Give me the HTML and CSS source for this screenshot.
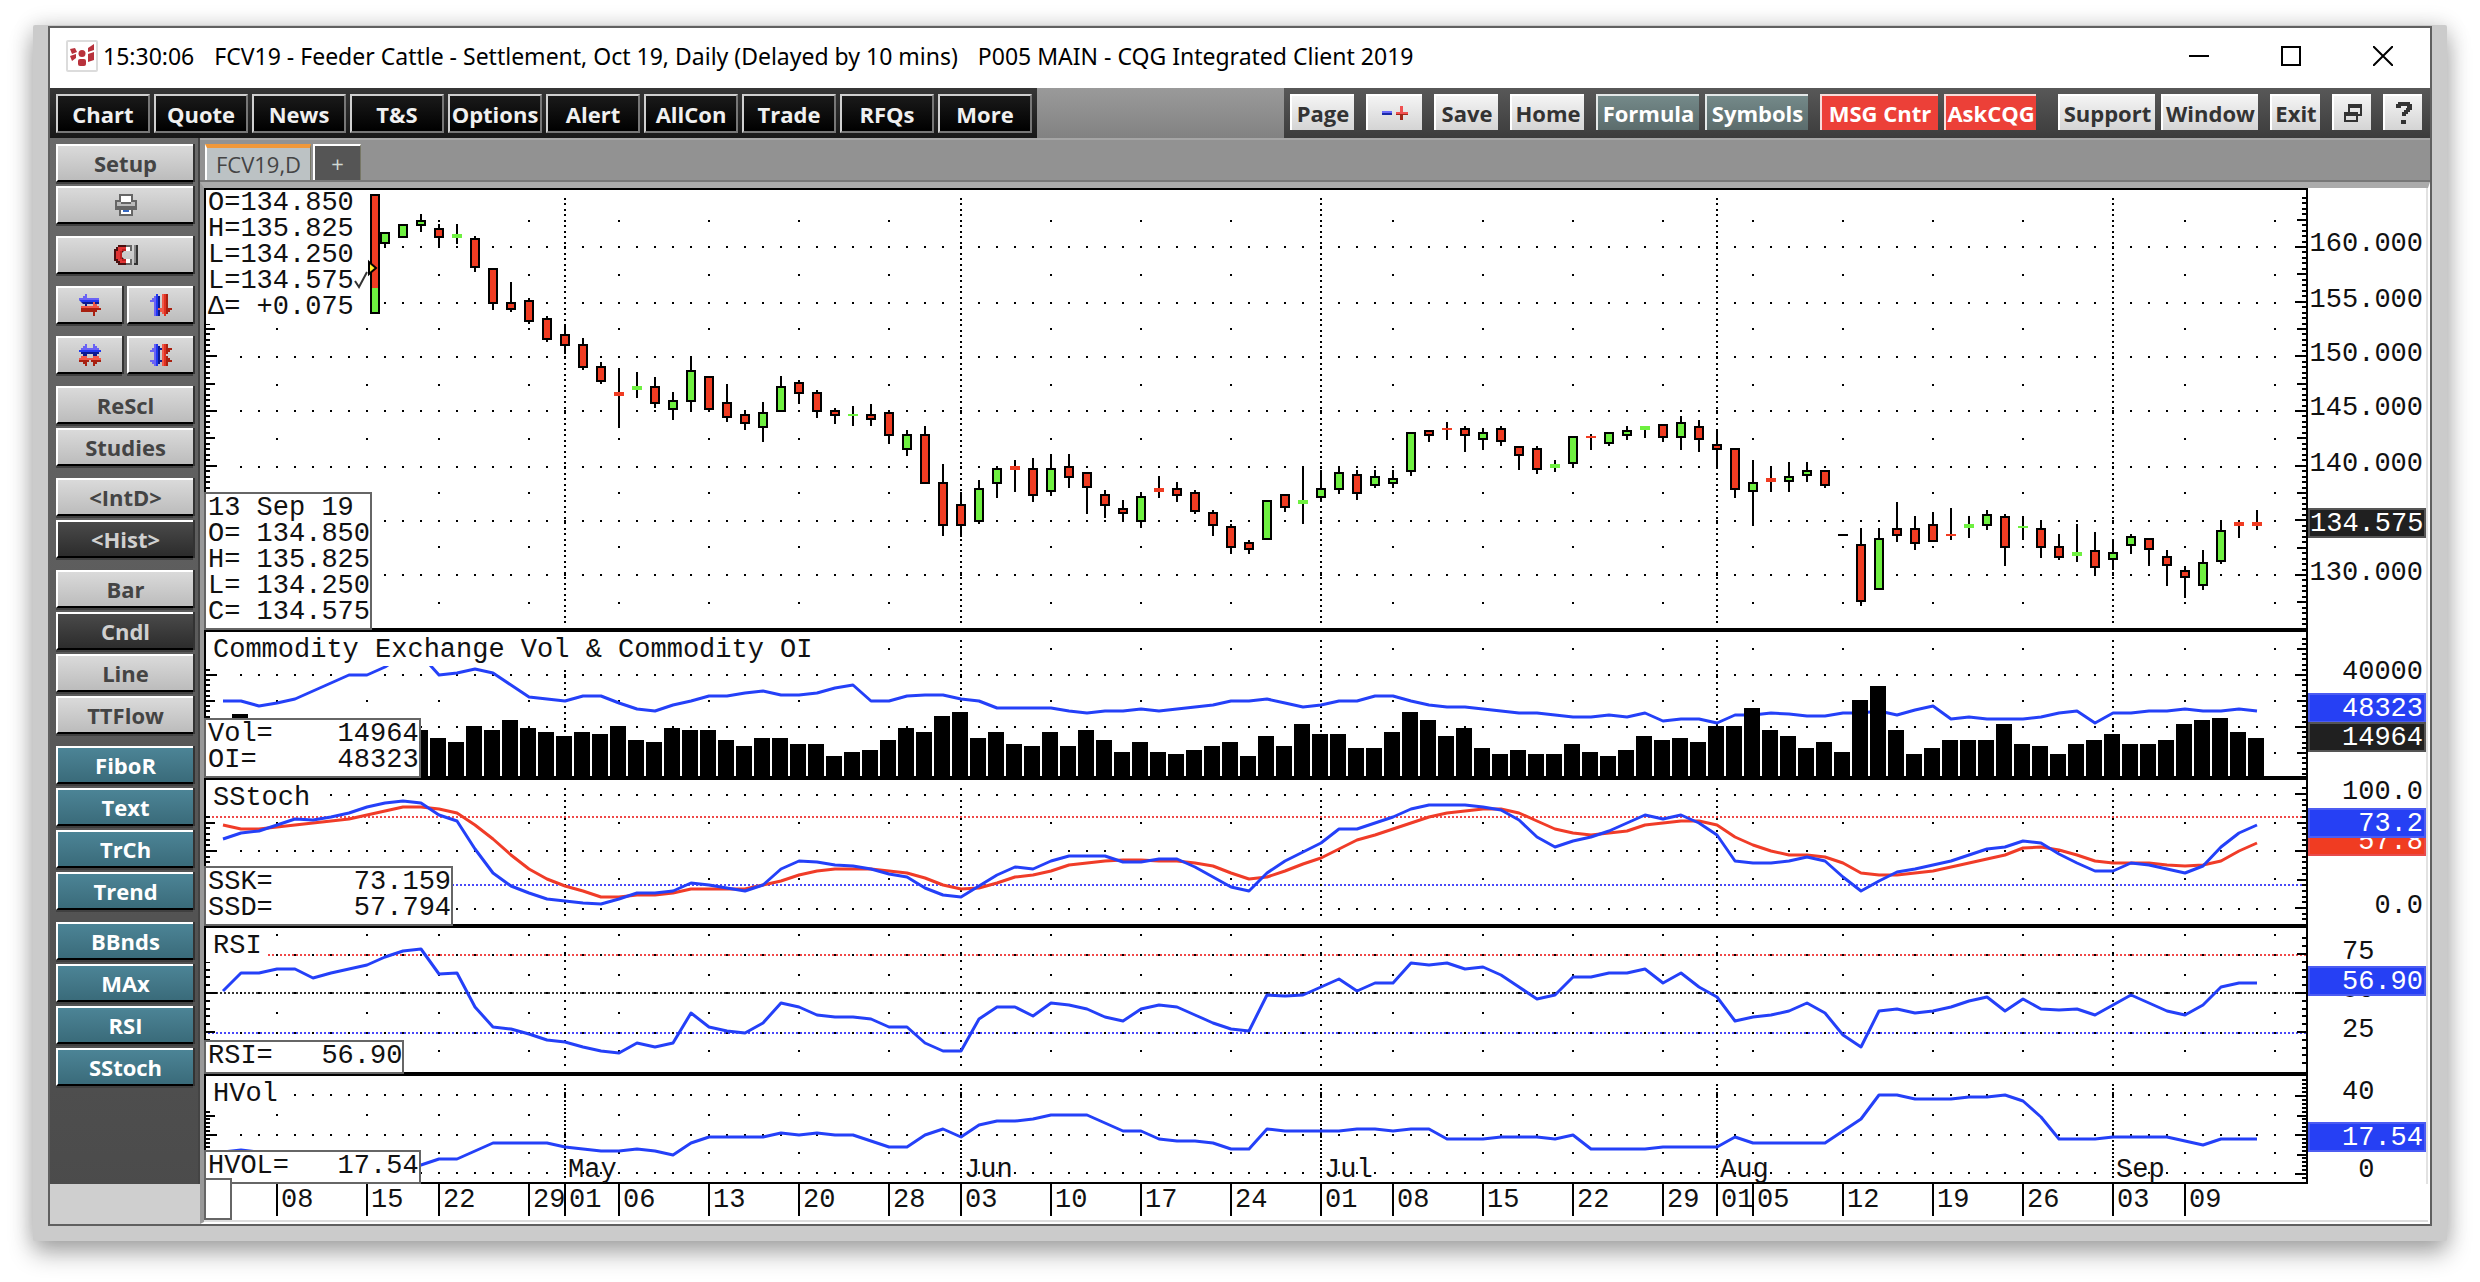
FILE: index.html
```html
<!DOCTYPE html>
<html lang="en">
<head>
<meta charset="utf-8">
<title>FCV19 - CQG Integrated Client 2019</title>
<link rel="stylesheet" href="styles.css">
</head>
<body>
<div class="frame">
<div class="window">
  <header class="titlebar">
    <svg class="logo" viewBox="0 0 32 32" aria-hidden="true"><rect x="1" y="1" width="30" height="30" rx="1" fill="#fff" stroke="#dcdcdc" stroke-width="2"/><g fill="#b8323c"><path d="M4 9l5-1 2 4-5 2zM4 16l6-2v4l-4 3zM22 8l6-4v6l-6 2zM22 14l6-2v8l-6 2z"/><circle cx="16" cy="13.500" r="3.500"/><rect x="12" y="19" width="8" height="7" rx="2"/></g></svg>
    <h1 class="caption"><span>15:30:06</span><span>FCV19 - Feeder Cattle - Settlement, Oct 19, Daily (Delayed by 10 mins)</span><span>P005 MAIN - CQG Integrated Client 2019</span></h1>
    <div class="winctl">
      <button type="button" aria-label="Minimize"><svg viewBox="0 0 20 20"><path d="M0 10h20" stroke="#000" stroke-width="2"/></svg></button>
      <button type="button" aria-label="Maximize"><svg viewBox="0 0 20 20"><path d="M1 1h18v18H1z" fill="none" stroke="#000" stroke-width="2"/></svg></button>
      <button type="button" aria-label="Close"><svg viewBox="0 0 20 20"><path d="M0 0l20 20M20 0L0 20" stroke="#000" stroke-width="2"/></svg></button>
    </div>
  </header>

  <nav class="toolbar">
    <div class="tools-left">
      <button type="button">Chart</button><button type="button">Quote</button><button type="button">News</button><button type="button">T&amp;S</button><button type="button">Options</button><button type="button">Alert</button><button type="button">AllCon</button><button type="button">Trade</button><button type="button">RFQs</button><button type="button">More</button>
    </div>
    <div class="tools-right">
      <button type="button" class="w-page">Page</button>
      <button type="button" class="w-pm" aria-label="Remove or add page"><svg class="icon" viewBox="0 0 26 16"><path d="M0 6h10v2H0z" fill="#6a6af8"/><path d="M0 8h10v2H0z" fill="#1a2aa8"/><path d="M18 1h3v6h5v2H14V7h4z" fill="#f05050"/><path d="M14 9h12v1h-5v5h-3v-5h-4z" fill="#a02818"/></svg></button>
      <button type="button" class="w-page">Save</button>
      <button type="button" class="w-home">Home</button>
      <div class="group"><button type="button" class="slate w-wide">Formula</button><button type="button" class="slate w-wide">Symbols</button></div>
      <div class="group"><button type="button" class="red w-msg">MSG Cntr</button><button type="button" class="red w-ask">AskCQG</button></div>
      <div class="group far"><button type="button" class="w-sup">Support</button><button type="button" class="w-sup">Window</button></div>
      <button type="button" class="w-exit">Exit</button>
      <button type="button" class="w-sq" aria-label="Restore"><svg class="icon18" viewBox="0 0 18 18"><path fill="#333" fill-rule="evenodd" d="M4 0h14v12h-4v6H0V8h4zM6 4v4h8v2h2V4zM2 12v4h10v-4z"/></svg></button>
      <button type="button" class="w-sq" aria-label="Help"><svg class="icon22" viewBox="0 0 16 22"><path fill="#333" d="M2 0h12v2h2v6h-2v2h-2v2h-2v2H6v-4h2V8h2V6h1V4H5v2H0V2h2zM5 18h5v4H5z"/></svg></button>
    </div>
  </nav>

  <div class="body">
    <aside class="sidebar">
      <div class="stack"><button type="button">Setup</button>
        <button type="button" aria-label="Print"><svg class="icon22" viewBox="0 0 11 11"><path fill="#666" d="M2 0h7v3h2v5h-2v3H2V8H0V3h2z"/><path fill="#fff" d="M3 1h5v3H3z"/><path fill="#bbb" d="M1 4h2v1h5V4h2v2H1z"/><path fill="#fff" d="M3 8h5v2H3z"/><path fill="#3567c0" d="M4 8h3v1H4z"/></svg></button></div>
      <div class="stack"><button type="button" aria-label="Snap"><svg class="icon24" viewBox="0 0 12 10"><path fill="#4a1010" d="M2 0h4v3H5L4 4v2l1 1h1v3H2V9H1V8H0V2h1V1h1z"/><path fill="#e03434" d="M2 1h4v1H4v1H3v4h1v1h2v1H3V8H2V7H1V3h1z"/><path fill="#c02020" d="M4 2h2v1H4zM3 3h1v4H3zM4 7h2v1H4z"/><path fill="#666" d="M6 0h3v3H6zM6 7h3v3H6z"/><path fill="#fff" d="M6 1h2v2H6zM6 7h2v2H6z"/><path fill="#333" d="M10 0h2v10h-2z"/><path fill="#888" d="M10 0h1v9h-1z"/></svg></button></div>
      <div class="stack pair"><button type="button" aria-label="Scroll horizontally"><svg class="icon22" viewBox="0 0 11 11"><path fill="#6a62f5" d="M0 3V2h2V1h1V0h1v2h6v1z"/><path fill="#2038f0" d="M0 3h10v1H1z"/><path fill="#0c1a90" d="M1 4h9v1H4v1H3V5H2z"/><path fill="#f05848" d="M1 6h6V4h1v1h1v1h1v1H1z"/><path fill="#a82010" d="M1 7h10v1H9v1H8v2H7V9H1z"/></svg></button><button type="button" aria-label="Scroll vertically"><svg class="icon22" viewBox="0 0 11 11"><path fill="#6a62f5" d="M0 4V3h1V2h1V1h1v10H2V4z"/><path fill="#2038f0" d="M3 0h1v11H3z"/><path fill="#0c1a90" d="M4 1h1v10H4z"/><path fill="#f05848" d="M6 0h1v10H6V9H5V8H4V7h2z"/><path fill="#e03020" d="M7 0h1v11H7z"/><path fill="#a82010" d="M8 0h1v7h2v1h-1v1H9v1H8z"/></svg></button></div>
      <div class="stack pair"><button type="button" aria-label="Compress horizontally"><svg class="icon22" viewBox="0 0 11 11"><path fill="#6a62f5" d="M0 3h1V2h1V1h1V0h1v2h3V0h1v1h1v1h1v1h1v1H0z"/><path fill="#2038f0" d="M0 3h11v1H0z"/><path fill="#0c1a90" d="M1 4h9v1H9v1H7V5H4v1H2V5H1z"/><path fill="#f05848" d="M0 7h1V6h3v1h3V6h3v1h1v1H0z"/><path fill="#a82010" d="M0 8h5v1H4v2H3v-1H2V9H0zM6 8h5v1H9v1H8v1H7V9H6z"/></svg></button><button type="button" aria-label="Compress vertically"><svg class="icon22" viewBox="0 0 11 11"><path fill="#6a62f5" d="M3 0v11H2v-1H1V9H0V8h2V4H0V3h1V2h1V0z"/><path fill="#2038f0" d="M3 0h1v11H3z"/><path fill="#0c1a90" d="M4 1h1v1h1v1H5v5h1v1H5v1H4z"/><path fill="#f05848" d="M6 0h1v11H6z"/><path fill="#e03020" d="M7 0h1v11H7z"/><path fill="#a82010" d="M8 0h1v2h2v1h-1v1H9v1H8v1h1v1h1v1h1v1H9v2H8z"/></svg></button></div>
      <div class="stack"><button type="button">ReScl</button><button type="button">Studies</button></div>
      <div class="stack"><button type="button">&lt;IntD&gt;</button><button type="button" class="on">&lt;Hist&gt;</button></div>
      <div class="stack"><button type="button">Bar</button><button type="button" class="on">Cndl</button><button type="button">Line</button><button type="button">TTFlow</button></div>
      <div class="stack teal"><button type="button">FiboR</button><button type="button">Text</button><button type="button">TrCh</button><button type="button">Trend</button></div>
      <div class="stack teal"><button type="button">BBnds</button><button type="button">MAx</button><button type="button">RSI</button><button type="button">SStoch</button></div>
      <div class="sidefoot"></div>
    </aside>

    <main class="work">
      <div class="tabs"><button type="button" class="tab">FCV19,D</button><button type="button" class="tab add" aria-label="New tab">+</button></div>
      <div class="chart">
        <section class="pane price" data-pane="price">
          <div class="plot">
            <pre class="quote">O=134.850
H=135.825
L=134.250
L=134.575
Δ= +0.075</pre>
            <svg class="tick" viewBox="0 0 14 20" aria-hidden="true"><path d="M1 11l4 6L13 2" fill="none" stroke="#333" stroke-width="2"/></svg>
            <svg class="range" viewBox="0 0 14 120" aria-hidden="true"><path d="M4 0h10v120H4z"/><path d="M6 2h6v92H6z" fill="#f03c22"/><path d="M6 94h6v24H6z" fill="#6ef040"/><path d="M3 68l7 6-7 6z" fill="#ffee30" stroke="#000" stroke-width="2"/></svg>
            <pre class="readout">13 Sep 19
O= 134.850
H= 135.825
L= 134.250
C= 134.575</pre>
          </div><div class="axis"></div>
        </section>
        <section class="pane" data-pane="vol">
          <div class="plot"><h2 class="study">Commodity Exchange Vol &amp; Commodity OI</h2>
            <pre class="readout">Vol=    14964
OI=     48323</pre></div><div class="axis"></div>
        </section>
        <section class="pane" data-pane="stoch">
          <div class="plot"><h2 class="study">SStoch</h2>
            <pre class="readout">SSK=     73.159
SSD=     57.794</pre></div><div class="axis"></div>
        </section>
        <section class="pane" data-pane="rsi">
          <div class="plot"><h2 class="study">RSI</h2>
            <pre class="readout">RSI=   56.90</pre></div><div class="axis"></div>
        </section>
        <section class="pane hvol" data-pane="hvol">
          <div class="plot"><h2 class="study">HVol</h2>
            <pre class="readout">HVOL=   17.54</pre></div><div class="axis"></div>
        </section>
        <div class="dates"><span class="cursor"></span></div>
      </div>
    </main>
  </div>
</div>
</div>
<script src="script.js"></script>
</body>
</html>
```
FILE: styles.css
```css
* { box-sizing: border-box; }
body { margin: 0; padding: 25px 33px 41px; background: #fff; font-family: "Open Sans", "Noto Sans", sans-serif; }
button { margin: 0; padding: 0; font: bold 22px/30px "Open Sans", "Noto Sans", sans-serif; display: flex; align-items: center; justify-content: center; white-space: nowrap; border-radius: 0; }
pre, h1, h2 { margin: 0; font-weight: normal; }

.frame { padding: 1px 15px 15px; background: #cbcbcb; border-radius: 2px; box-shadow: 0 12px 24px rgba(0,0,0,.32), 0 0 22px rgba(0,0,0,.14); }
.window { border: 2px solid #606060; background: #fff; }

.titlebar { display: flex; align-items: center; height: 60px; padding: 0 37px 4px 16px; }
.logo { width: 32px; height: 32px; }
.caption { display: flex; flex: 1; gap: 20px; padding-left: 5px; font: 23px/32px "Noto Sans", sans-serif; color: #000; white-space: nowrap; }
.winctl { display: flex; gap: 72px; }
.winctl button { width: 20px; height: 20px; border: 0; background: none; }
.winctl svg { width: 20px; height: 20px; }

.toolbar { display: flex; justify-content: space-between; height: 50px; background: linear-gradient(#9a9a9a, #828282); }
.tools-left { display: flex; gap: 4px; padding: 6px 5px 5px 6px; background: linear-gradient(#363636, #181818); }
.tools-left button { width: 94px; height: 39px; color: #f0f0f0; background: linear-gradient(#1a1a1a, #000); border: 2px solid #d0d0d0; border-right-color: #777; border-bottom-color: #777; }
.tools-right { display: flex; gap: 12px; padding: 6px 8px 8px 6px; background: linear-gradient(#585858, #3c3c3c); }
.tools-right button { height: 36px; color: #333; background: linear-gradient(#f4f4f4, #d4d4d4); border: 0; border-top: 2px solid #fff; border-left: 2px solid #fff; }
.tools-right .slate { color: #fff; background: linear-gradient(#748989, #5b6c6c); border-color: #e4e8e8; }
.tools-right .red { color: #fff; background: #ec4038; border-color: #f8dcda; }
.group { display: flex; gap: 6px; }
.far { margin-left: 10px; }
.w-page { width: 64px; }
.w-pm { width: 56px; }
.w-home { width: 74px; }
.w-wide { width: 103px; }
.w-msg { width: 118px; }
.w-ask { width: 92px; }
.w-sup { width: 97px; }
.w-exit { width: 50px; }
.w-sq { width: 39px; }
.icon { width: 26px; height: 16px; }
.icon18 { width: 18px; height: 18px; }
.icon22 { height: 22px; }
.icon24 { width: 24px; height: 20px; }

.body { display: grid; grid-template-columns: 150px 1fr; }
.sidebar { display: flex; flex-direction: column; gap: 12px; padding-top: 6px; background: linear-gradient(#6a6a6a, #4a4a4a); border-right: 2px solid #444; }
.stack { display: flex; flex-direction: column; gap: 4px; padding: 0 5px 0 6px; }
.stack button { height: 38px; color: #444; background: linear-gradient(#dadada, #bcbcbc); border: 2px solid #fff; border-right: 0; border-bottom-color: #000; box-shadow: 2px 0 0 #333, 0 2px 0 #404040; }
.stack .on { color: #d0d0d0; background: linear-gradient(#4a4a4a, #2c2c2c); }
.teal button { color: #fff; background: linear-gradient(#4c8496, #3a6b7a); }
.pair { flex-direction: row; gap: 5px; }
.pair button { flex: 1; }
.sidefoot { height: 40px; margin: auto -2px 0 0; background: #cfcfcf; }

.work { min-width: 0; }
.tabs { display: flex; gap: 2px; height: 44px; padding: 4px 0 0 5px; background: #929292; border-top: 2px solid #a6a6a6; border-bottom: 2px solid #777; }
.tab { width: 106px; height: 36px; font: 22px/30px "Open Sans", "Noto Sans", sans-serif; color: #444; background: #bcc2c4; border: 0; border-top: 4px solid #f0983a; border-left: 2px solid #fff; border-right: 1px solid #776; }
.tab.add { width: 48px; color: #d0d8d4; background: #555; border-top: 2px solid #fff; }

.chart { border-top: 6px solid #ababab; border-left: 4px solid #999; border-right: 2px solid #fff; border-bottom: 2px solid #fff; box-shadow: inset 0 -2px 0 #ddd; font: 27px/26px "Liberation Mono", monospace; color: #111; }
.pane { display: grid; grid-template-columns: 1fr 120px; height: 148px; }
.price { height: 444px; }
.hvol { height: 108px; }
.plot { position: relative; border-bottom: 4px solid #000; }
.price .plot { border-top: 2px solid #000; }
.hvol .plot { border-bottom-width: 2px; }
.canvas { display: block; width: 100%; height: 100%; }
.axis { position: relative; border-right: 2px solid #e2e2e2; }
.axis span { position: absolute; left: 0; width: 118px; height: 30px; margin-top: -15px; padding-right: 3px; line-height: 32px; text-align: right; white-space: pre; }
.axis .mark { color: #fff; border: 2px solid; line-height: 28px; padding-right: 1px; }
.axis .blue { background: #2640f4; border-color: #4c5cf2; }
.axis .dark { background: #202020; border-color: #555; }
.axis .redm { background: #f03c22; border-color: #e84a4a; }
.quote, .readout, .study { position: absolute; z-index: 1; font: inherit; background: #fff; }
.quote { left: 2px; top: 0; padding: 0 14px 4px 2px; }
.range { position: absolute; z-index: 2; left: 162px; top: 4px; width: 14px; height: 120px; }
.tick { position: absolute; z-index: 2; left: 150px; top: 80px; width: 14px; height: 20px; }
.readout { left: 0; bottom: -2px; padding: 1px 0 3px 2px; border: 2px solid #666; }
.study { left: 2px; top: 0; padding: 5px 4px 3px 7px; }
.month { position: absolute; z-index: 1; bottom: 0; line-height: 24px; padding-left: 3px; }
.dates { position: relative; height: 38px; margin-right: 120px; }
.dates .day { position: absolute; top: 0; height: 32px; padding-left: 3px; line-height: 32px; border-left: 2px solid #000; }
.cursor { position: absolute; left: 0; top: -6px; z-index: 2; width: 28px; height: 42px; background: #fff; border: 2px solid #666; }
```
FILE: script.js
```js
// Plot space: 2104 units wide, one trading day every 18 units.
const LEFT = 204, WIDTH = 2104, STEP = 18;
const X = i => 223 + i * STEP;
const WEEKS = [3, 8, 12, 17, 22, 27, 32, 37, 46, 51, 56, 65, 70, 75, 80, 85, 90, 95, 100, 109, 114];
const MONTHS = { 19: 'May', 41: 'Jun', 61: 'Jul', 83: 'Aug', 105: 'Sep' };
const DAYS = { 3: '08', 8: '15', 12: '22', 17: '29', 19: '01', 22: '06', 27: '13', 32: '20', 37: '28', 41: '03', 46: '10', 51: '17', 56: '24', 61: '01', 65: '08', 70: '15', 75: '22', 80: '29', 83: '01', 85: '05', 90: '12', 95: '19', 100: '26', 105: '03', 109: '09' };

// body top, body bottom, high, low, kind (r/g candle, R/G flat, k no trade); first entry is day 9
const CANDLES = `232 244 232 248 g,224 238 224 238 g,220 226 214 232 g,228 238 224 247 r,234 238 224 244 G,238 268 236 272 r,268 304 268 310 r,302 310 282 312 r,300 322 298 324 r,318 340 316 342 r,334 346 325 352 r,344 368 338 370 r,366 382 362 384 r,392 396 368 428 R,386 390 372 398 G,386 404 377 408 r,400 410 392 420 g,370 402 356 412 g,376 410 376 412 r,402 418 384 422 r,414 424 410 430 r,412 428 402 442 g,386 412 376 412 g,382 394 380 404 r,392 412 390 418 r,410 416 408 424 r,414 416 406 426 G,414 420 404 426 r,412 436 410 444 r,434 450 430 456 g,434 484 426 484 r,482 526 464 536 r,504 526 492 537 r,488 522 480 524 g,468 484 466 498 g,466 470 460 492 R,468 496 458 502 r,468 492 454 496 g,466 478 454 488 r,472 488 472 514 r,494 506 490 518 r,508 514 500 522 r,496 522 492 528 g,488 492 476 498 R,488 496 482 502 r,492 512 490 514 r,512 526 510 536 r,526 548 524 554 r,542 550 540 554 r,500 540 500 540 g,494 508 494 512 r,500 504 466 524 G,488 498 470 500 g,472 490 466 494 g,474 494 470 500 r,476 486 470 488 g,478 484 470 488 g,432 472 432 476 g,430 436 430 442 r,428 430 422 440 R,428 436 426 452 r,432 440 428 450 g,428 442 426 446 r,446 456 446 470 r,448 470 446 474 r,464 468 460 472 G,436 464 436 468 g,436 438 434 450 R,432 444 432 446 g,430 436 426 440 g,426 430 426 438 G,424 438 424 442 r,422 438 416 450 g,426 440 420 452 r,444 450 430 467 r,448 490 448 498 r,482 492 460 526 g,478 482 466 492 R,476 482 462 492 g,470 476 462 482 g,470 486 470 488 r,534 536 534 536 k,544 602 528 606 r,538 590 528 590 g,528 536 502 542 r,528 544 516 550 r,524 542 512 542 r,534 536 508 540 R,524 528 516 538 G,514 526 510 530 g,516 548 514 566 r,526 528 516 540 G,528 548 520 558 r,546 558 534 560 r,552 556 524 562 G,550 568 532 576 r,552 560 540 570 g,536 546 534 554 g,538 550 538 566 r,556 566 550 586 r,570 578 566 598 r,562 586 550 590 g,530 562 520 564 g,522 526 520 538 R,522 526 510 530 R`;
// tops of the volume bars from day 11
const VOLUME = '730 738 742 726 730 720 728 732 736 732 734 726 740 742 728 730 730 740 746 738 738 744 744 756 752 750 740 728 732 716 712 738 732 744 746 732 746 730 740 752 742 752 754 750 746 742 756 736 746 724 734 734 748 748 732 712 720 736 728 748 754 750 754 754 744 752 756 750 736 740 738 742 726 726 708 730 736 748 742 752 700 686 730 754 748 740 740 740 724 744 746 754 744 740 734 744 744 740 724 720 718 732 738';
const OI = '701 701 706 703 699 691 683 675 675 667 655 655 675 673 669 673 685 697 699 701 696 696 703 709 711 705 701 696 696 693 691 695 695 693 688 685 701 701 696 695 695 699 701 708 708 708 708 711 713 711 711 709 711 709 707 705 701 701 699 703 707 705 701 701 696 696 701 705 707 707 709 711 713 713 715 717 717 715 717 713 721 719 719 723 715 715 713 714 716 716 713 713 711 715 710 706 719 717 719 719 719 717 713 711 723 713 713 711 711 709 711 711 709 711';
const SSK = '839 833 831 825 819 820 817 813 807 803 801 803 815 821 849 873 886 893 899 901 903 904 899 893 893 891 883 885 888 891 885 869 861 862 865 866 869 874 877 888 895 897 886 875 867 869 861 856 856 856 862 862 859 859 867 877 887 891 873 861 852 843 829 829 823 817 809 805 805 805 807 810 820 837 847 841 837 831 823 815 819 815 823 835 861 863 863 861 857 861 877 891 881 872 869 865 861 855 849 847 841 843 854 863 871 871 863 865 869 873 866 847 833 825';
const SSD = '825 829 829 827 825 823 821 819 815 811 807 807 809 813 825 839 855 869 879 886 891 897 897 895 895 893 889 889 889 889 885 881 875 871 869 869 869 871 873 878 885 889 888 883 877 875 871 865 863 861 860 860 861 861 863 866 873 879 877 871 864 858 849 840 835 829 823 817 813 811 809 809 813 821 829 833 835 833 831 825 823 821 821 825 837 845 851 855 855 857 863 873 875 875 873 871 867 863 859 855 848 847 850 855 861 863 863 863 865 866 865 861 851 843';
const RSI = '991 973 973 969 969 978 973 969 965 957 951 949 974 973 1007 1027 1029 1034 1040 1042 1047 1051 1053 1043 1047 1043 1013 1027 1031 1033 1023 1003 1007 1015 1017 1017 1019 1027 1027 1043 1051 1051 1019 1007 1007 1016 1003 1005 1009 1017 1021 1009 1005 1007 1015 1023 1029 1031 995 996 995 987 979 991 983 983 963 965 963 969 967 975 987 999 995 977 977 973 973 969 983 973 987 997 1021 1017 1015 1011 1003 1013 1035 1047 1011 1009 1013 1011 1007 1001 997 1011 999 1009 1010 1009 1015 1005 995 1003 1011 1015 1005 987 983 983';
const HVOL = '1152 1150 1152 1160 1166 1170 1170 1170 1170 1170 1168 1165 1159 1159 1151 1143 1143 1143 1143 1147 1149 1151 1151 1149 1151 1155 1143 1137 1137 1137 1137 1133 1135 1133 1135 1135 1141 1147 1147 1135 1129 1137 1125 1121 1121 1119 1115 1115 1115 1123 1131 1131 1139 1141 1141 1143 1149 1149 1129 1131 1131 1131 1131 1129 1129 1131 1129 1129 1139 1139 1139 1137 1137 1137 1139 1135 1149 1149 1149 1149 1147 1147 1147 1147 1137 1143 1143 1143 1143 1143 1131 1119 1095 1095 1099 1099 1099 1097 1097 1095 1101 1117 1139 1139 1139 1137 1137 1137 1137 1141 1145 1139 1139 1139';

const PANES = {
  price: { top: 190, h: 438, full: [247, 303, 357, 411, 467, 521, 575], half: [221, 275, 329, 385, 439, 493, 547, 603], dash: '2 3 2 4', zero: 575, unit: 5.467,
    labels: [[243, '160.000'], [299, '155.000'], [353, '150.000'], [407, '145.000'], [463, '140.000'], [523, '134.575', 'dark'], [572, '130.000']] },
  vol: { top: 632, h: 144, full: [675, 727], half: [649, 701, 753], dash: '2 4', zero: 727, unit: 5.2, lines: [[OI, '#2440f8']],
    labels: [[671, '40000'], [708, '48323', 'blue'], [737, '14964', 'dark']] },
  stoch: { top: 780, h: 144, full: [795, 851, 909], half: [823, 879], dash: '2 4', zero: 851, unit: 5.7, lines: [[SSD, '#f03c28'], [SSK, '#2440f8']], levels: [[817, '#f04848'], [885, '#4848f8']],
    labels: [[791, '100.0'], [841, '57.8', 'redm'], [823, '73.2', 'blue'], [905, '0.0']] },
  rsi: { top: 928, h: 144, full: [955, 993, 1033], half: [935, 975, 1013, 1051], dash: '2 6', zero: 993, unit: 7.8, lines: [[RSI, '#2440f8']], levels: [[955, '#f04848'], [993, '#333'], [1033, '#4848f8']],
    labels: [[951, '75   '], [989, '50   '], [981, '56.90', 'blue'], [1029, '25   ']] },
  hvol: { top: 1076, h: 106, full: [1095, 1135, 1173], half: [1115, 1153], dash: '2 2', zero: 1135, unit: 3.9, lines: [[HVOL, '#2440f8']],
    labels: [[1091, '40   '], [1137, '17.54', 'blue'], [1169, '0   ']] }
};

const box = (x, y, w, h, fill = '#000') => `<path d="M${x} ${y}h${w}v${h}h${-w}z" fill="${fill}"/>`;

function scaleTicks(p) {
  let d = '';
  const first = Math.ceil((p.top + 3 - p.zero) / p.unit);
  for (let k = first; p.zero + k * p.unit < p.top + p.h - 2; k++) {
    const y = Math.round(p.zero + k * p.unit) - 1;
    const len = k % 10 === 0 ? 11 : k % 5 === 0 ? 9 : 4;
    d += box(LEFT + 2, y, len, 2) + box(LEFT + WIDTH - 2 - len, y, len, 2);
  }
  return d;
}

function candles() {
  return CANDLES.split(',').map((row, n) => {
    const [a, b, hi, lo, kind] = row.split(' ');
    const x = X(n + 9), h = b - a;
    const wick = box(x - 1, +hi, 2, lo - hi);
    if (kind === 'k') return box(x - 5, +a, 10, h);
    if (kind === 'R' || kind === 'G') return wick + box(x - 5, +a, 10, h, kind === 'R' ? '#f03c22' : '#6ef040');
    return wick + box(x - 5, +a, 10, h) + box(x - 3, +a + 2, 6, h - 4, kind === 'r' ? '#f03c22' : '#6ef040');
  }).join('');
}

function volume() {
  return box(X(1) - 9, 714, 16, 62) + VOLUME.split(' ').map((y, n) => box(X(n + 11) - 9, +y, 16, 776 - y)).join('');
}

document.querySelectorAll('.pane').forEach(pane => {
  const name = pane.dataset.pane, p = PANES[name];
  let s = '';
  for (const [y, c] of p.levels || []) s += `<path d="M${LEFT} ${y}h${WIDTH}" stroke="${c}" stroke-width="2" stroke-dasharray="2 2"/>`;
  for (const y of p.full) for (let i = 1; i <= 114; i++) s += box(X(i) - 1, y - 1, 2, 2);
  for (const y of p.half) for (const i of WEEKS) s += box(X(i) - 1, y - 1, 2, 2);
  for (const i in MONTHS) s += `<path d="M${X(+i)} ${p.top + 8}V${p.top + p.h - 4}" stroke="#000" stroke-width="2" stroke-dasharray="${p.dash}"/>`;
  for (const [data, c] of p.lines || []) s += `<polyline points="${data.split(' ').map((y, i) => X(i) + ',' + y).join(' ')}" fill="none" stroke="${c}" stroke-width="3" stroke-linejoin="round"/>`;
  if (name === 'price') s += candles();
  if (name === 'vol') s += volume();
  s += box(LEFT, p.top, 2, p.h) + box(LEFT + WIDTH - 2, p.top, 2, p.h) + scaleTicks(p);
  const plot = pane.querySelector('.plot');
  plot.insertAdjacentHTML('afterbegin', `<svg class="canvas" viewBox="${LEFT} ${p.top} ${WIDTH} ${p.h}" preserveAspectRatio="none" aria-hidden="true">${s}</svg>`);
  const start = name === 'price' ? p.top - 2 : p.top;
  pane.querySelector('.axis').innerHTML = p.labels.map(([y, t, c]) => `<span class="${c ? 'mark ' + c : ''}" style="top:${y - start}px">${t}</span>`).join('');
  if (name === 'hvol') for (const i in MONTHS) plot.insertAdjacentHTML('beforeend', `<span class="month" style="left:${(X(+i) - LEFT) / WIDTH * 100}%">${MONTHS[i]}</span>`);
});

const dates = document.querySelector('.dates');
for (const i in DAYS) dates.insertAdjacentHTML('beforeend', `<span class="day" style="left:${(X(+i) - 1 - LEFT) / WIDTH * 100}%">${DAYS[i]}</span>`);
```
